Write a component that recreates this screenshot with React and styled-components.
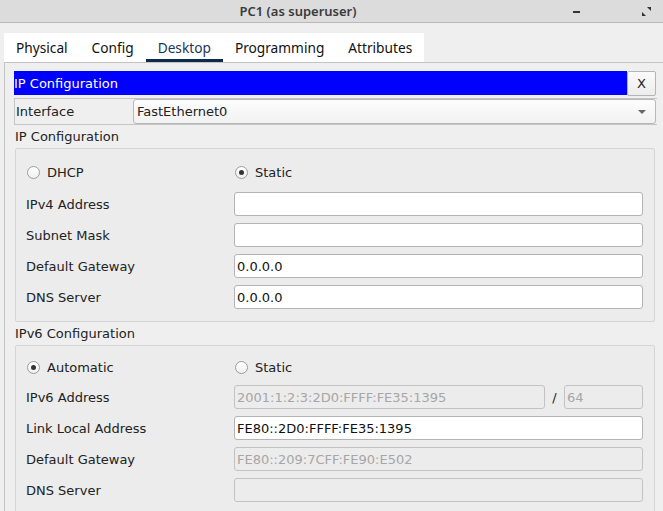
import React, { useState } from "react";
import styled, { createGlobalStyle } from "styled-components";

const GlobalStyle = createGlobalStyle`
  html, body {
    margin: 0;
    padding: 0;
    background: #efefef;
  }
  * {
    box-sizing: border-box;
  }
`;

const TABS = ["Physical", "Config", "Desktop", "Programming", "Attributes"];

const IPV4_ROWS = [
  { label: "IPv4 Address", value: "" },
  { label: "Subnet Mask", value: "" },
  { label: "Default Gateway", value: "0.0.0.0" },
  { label: "DNS Server", value: "0.0.0.0" },
];

const Radio = ({ checked, label }) => (
  <RadioLabel>
    <RadioCircle checked={checked} />
    {label}
  </RadioLabel>
);

const App = () => {
  const [tab, setTab] = useState("Desktop");

  return (
    <Window>
      <GlobalStyle />
      <TitleBar>
        <Title>PC1 (as superuser)</Title>
        <WindowButtons>
          <MinimizeIcon />
          <svg width="9" height="9" viewBox="0 0 9 9">
            <path d="M5 0h4v4z M0 5v4h4z" fill="#333" />
          </svg>
        </WindowButtons>
      </TitleBar>

      <Body>
        <TabStrip>
          {TABS.map((t) => (
            <Tab key={t} active={t === tab} onClick={() => setTab(t)}>
              {t}
            </Tab>
          ))}
        </TabStrip>

        <Panel>
          <HeaderRow>
            <HeaderBar>IP Configuration</HeaderBar>
            <CloseButton>X</CloseButton>
          </HeaderRow>

          <InterfaceRow>
            <InterfaceLabel>Interface</InterfaceLabel>
            <Combo>
              FastEthernet0
              <ComboArrow />
            </Combo>
          </InterfaceRow>

          <SectionLabel>IP Configuration</SectionLabel>
          <GroupBox pad={12} lead={24} bottom={12}>
            <Radio label="DHCP" />
            <Radio checked label="Static" />
            {IPV4_ROWS.map((r) => (
              <React.Fragment key={r.label}>
                <FieldLabel>{r.label}</FieldLabel>
                <Field>{r.value}</Field>
              </React.Fragment>
            ))}
          </GroupBox>

          <SectionLabel>IPv6 Configuration</SectionLabel>
          <GroupBox pad={11} lead={21} bottom={11}>
            <Radio checked label="Automatic" />
            <Radio label="Static" />

            <FieldLabel>IPv6 Address</FieldLabel>
            <PrefixRow>
              <Field disabled>2001:1:2:3:2D0:FFFF:FE35:1395</Field>
              <Slash>/</Slash>
              <PrefixField disabled>64</PrefixField>
            </PrefixRow>

            <FieldLabel>Link Local Address</FieldLabel>
            <Field>FE80::2D0:FFFF:FE35:1395</Field>

            <FieldLabel>Default Gateway</FieldLabel>
            <Field disabled>FE80::209:7CFF:FE90:E502</Field>

            <FieldLabel>DNS Server</FieldLabel>
            <Field disabled />
          </GroupBox>
        </Panel>
      </Body>
    </Window>
  );
};

export default App;

const Window = styled.div`
  width: 663px;
  height: 511px;
  overflow: hidden;
  display: flex;
  flex-direction: column;
  background: #efefef;
  font-family: "DejaVu Sans", sans-serif;
  font-size: 13px;
  color: #222;
`;

const TitleBar = styled.div`
  position: relative;
  height: 23px;
  flex-shrink: 0;
  background: #dcdcdc;
  border-bottom: 1px solid #b9b9b9;
  display: flex;
  align-items: center;
  justify-content: center;
  padding-right: 67px;
`;

const Title = styled.div`
  font-family: "Noto Sans", sans-serif;
  font-weight: 600;
  font-size: 13px;
  color: #3a3a3a;
`;

const WindowButtons = styled.div`
  position: absolute;
  right: 12px;
  top: 7px;
  display: flex;
  align-items: center;
  gap: 62px;
`;

const MinimizeIcon = styled.span`
  display: block;
  width: 7px;
  height: 2px;
  background: #333;
`;

const Body = styled.div`
  flex: 1;
  display: flex;
  flex-direction: column;
  padding: 10px 0 0 4px;
`;

const TabStrip = styled.div`
  display: flex;
  align-self: flex-start;
  height: 29px;
  background: #fff;
  font-family: "Noto Sans", sans-serif;
  font-size: 13.7px;
`;

const Tab = styled.div`
  display: flex;
  align-items: center;
  padding: 2px 12px 0;
  cursor: pointer;
  color: ${(p) => (p.active ? "#1d3557" : "#111")};
  border-bottom: 3px solid ${(p) => (p.active ? "#0d2a4d" : "transparent")};
`;

const Panel = styled.div`
  flex: 1;
  border-left: 1px solid #c3c3c3;
  border-top: 1px solid #c3c3c3;
  padding: 8px 7px 0 9px;
  display: flex;
  flex-direction: column;
`;

const HeaderRow = styled.div`
  display: flex;
  height: 25px;
`;

const HeaderBar = styled.div`
  flex: 1;
  background: #0000ff;
  color: #fff;
  display: flex;
  align-items: center;
  height: 24px;
`;

const CloseButton = styled.button`
  width: 29px;
  height: 25px;
  margin: 0;
  padding: 0;
  border: 1px solid #b5b5b5;
  border-radius: 2px;
  background: linear-gradient(#fbfbfb, #ededed);
  font-family: "DejaVu Sans", sans-serif;
  font-size: 13px;
  color: #222;
`;

const InterfaceRow = styled.div`
  display: flex;
  align-items: center;
  height: 27px;
  margin-top: 2px;
  border: 1px solid #c4c4c4;
  border-right: none;
  margin-right: -1px;
`;

const InterfaceLabel = styled.div`
  width: 118px;
  padding-left: 1px;
`;

const Combo = styled.div`
  flex: 1;
  height: 25px;
  display: flex;
  align-items: center;
  justify-content: space-between;
  padding: 0 9px 0 3px;
  border: 1px solid #b8b8b8;
  border-radius: 3px;
  background: linear-gradient(#fdfdfd, #f1f1f1);
  margin-right: 1px;
`;

const ComboArrow = styled.span`
  width: 0;
  height: 0;
  border-left: 4px solid transparent;
  border-right: 4px solid transparent;
  border-top: 4px solid #666;
`;

const SectionLabel = styled.div`
  height: 23px;
  display: flex;
  align-items: center;
  padding-left: 1px;
`;

const GroupBox = styled.div`
  display: grid;
  grid-template-columns: 208px 1fr;
  grid-template-rows: ${(p) => p.lead}px;
  grid-auto-rows: 24px;
  row-gap: 7px;
  align-items: center;
  margin-left: 1px;
  margin-right: 1px;
  padding: ${(p) => p.pad}px 11px ${(p) => p.bottom}px 10px;
  border: 1px solid #d5d5d5;
  border-radius: 2px;
  background: #ececec;
`;

const RadioLabel = styled.label`
  display: flex;
  align-items: center;
  gap: 7px;
  padding-left: 1px;
  margin-bottom: 1px;
`;

const RadioCircle = styled.span`
  position: relative;
  width: 13px;
  height: 13px;
  border-radius: 50%;
  border: 1px solid #9c9c9c;
  background: linear-gradient(#ffffff, #f0f0f0);
  &::after {
    content: "";
    display: ${(p) => (p.checked ? "block" : "none")};
    position: absolute;
    left: 3px;
    top: 3px;
    width: 5px;
    height: 5px;
    border-radius: 50%;
    background: #333;
  }
`;

const FieldLabel = styled.div`
  white-space: nowrap;
`;

const Field = styled.div`
  height: 24px;
  display: flex;
  align-items: center;
  padding-left: 2px;
  border: 1px solid ${(p) => (p.disabled ? "#c2c2c2" : "#b4b4b4")};
  border-radius: 3px;
  background: ${(p) => (p.disabled ? "#ececec" : "#ffffff")};
  color: ${(p) => (p.disabled ? "#a6a6a6" : "#111")};
  min-width: 0;
  flex: 1;
  white-space: nowrap;
  overflow: hidden;
`;

const PrefixRow = styled.div`
  display: flex;
  align-items: center;
`;

const Slash = styled.span`
  width: 19px;
  text-align: center;
  color: #222;
`;

const PrefixField = styled(Field)`
  flex: 0 0 79px;
`;
